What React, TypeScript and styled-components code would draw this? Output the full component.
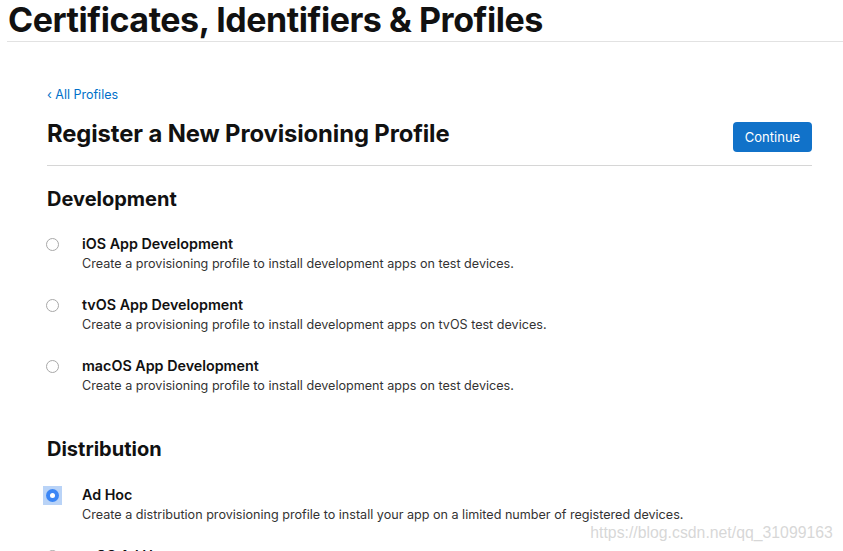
import React from "react";
import styled, { createGlobalStyle } from "styled-components";

const Global = createGlobalStyle`
  html, body { margin: 0; padding: 0; background: #fff; }
  body { font-family: Inter, "Noto Sans", "Liberation Sans", sans-serif; color: #1d1d1f; overflow: hidden; }
`;

const Page = styled.div`
  position: relative;
  width: 843px;
  height: 551px;
  overflow: hidden;
`;

const TopBar = styled.header`
  margin-left: 7px;
  border-bottom: 1px solid #e2e2e2;
  height: 41px;
  display: flex;
  align-items: flex-start;
`;

const PageTitle = styled.h1`
  margin: 0;
  padding-left: 1px;
  font-size: 34px;
  line-height: 42px;
  margin-top: -1px;
  font-weight: 700;
  letter-spacing: -0.45px;
  color: #111;
`;

const Content = styled.main`
  padding: 41px 31px 0 47px;
`;

const BackLink = styled.a`
  display: inline-flex;
  align-items: center;
  gap: 4px;
  font-size: 12.5px;
  line-height: 18px;
  color: #0070c9;
  text-decoration: none;
`;

const Header = styled.div`
  display: flex;
  align-items: flex-end;
  justify-content: space-between;
  padding: 16px 0 13px;
  border-bottom: 1px solid #d6d6d6;
`;

const Heading = styled.h2`
  margin: 0 0 4px;
  font-size: 23.8px;
  line-height: 28px;
  font-weight: 700;
  color: #111;
  letter-spacing: -0.1px;
`;

const Button = styled.button`
  font-family: inherit;
  background: #1172c9;
  color: #fff;
  border: 0;
  border-radius: 4px;
  width: 79px;
  height: 30px;
  font-size: 13px;
  cursor: pointer;
`;

const Section = styled.section<{ $top: number }>`
  margin-top: ${(p) => p.$top}px;
`;

const SectionTitle = styled.h3`
  margin: 0;
  font-size: 20px;
  line-height: 24px;
  font-weight: 700;
  color: #111;
`;

const List = styled.div<{ $top: number }>`
  margin-top: ${(p) => p.$top}px;
  display: flex;
  flex-direction: column;
  gap: 21px;
`;

const Row = styled.label`
  display: grid;
  grid-template-columns: 35px 1fr;
  align-items: start;
`;

const RadioWrap = styled.span<{ $focus: boolean }>`
  width: 19px;
  height: 19px;
  margin-left: -4px;
  margin-top: 1px;
  display: flex;
  align-items: center;
  justify-content: center;
  background: ${(p) => (p.$focus ? "#b9d3f7" : "transparent")};
`;

const Radio = styled.span<{ $checked: boolean }>`
  box-sizing: border-box;
  width: 13px;
  height: 13px;
  border-radius: 50%;
  border: ${(p) => (p.$checked ? "none" : "1px solid #a8a8a8")};
  background: ${(p) => (p.$checked ? "#3b86f5" : "#fff")};
  display: flex;
  align-items: center;
  justify-content: center;
  &::after {
    content: "";
    display: ${(p) => (p.$checked ? "block" : "none")};
    width: 5px;
    height: 5px;
    border-radius: 50%;
    background: #fff;
  }
`;

const Texts = styled.span`
  display: flex;
  flex-direction: column;
`;

const OptTitle = styled.span`
  font-size: 14.3px;
  line-height: 20px;
  font-weight: 600;
  color: #111;
`;

const OptDesc = styled.span`
  font-size: 12.6px;
  line-height: 20px;
  color: #333;
`;

const Watermark = styled.div`
  position: absolute;
  right: 10px;
  top: 522px;
  font-family: "Liberation Sans", sans-serif;
  font-size: 17px;
  line-height: 22px;
  color: rgba(205, 205, 205, 0.8);
  transform: scaleX(0.93);
  transform-origin: right center;
`;

type Opt = { title: string; desc: string; checked?: boolean };

const dev: Opt[] = [
  { title: "iOS App Development", desc: "Create a provisioning profile to install development apps on test devices." },
  { title: "tvOS App Development", desc: "Create a provisioning profile to install development apps on tvOS test devices." },
  { title: "macOS App Development", desc: "Create a provisioning profile to install development apps on test devices." },
];

const dist: Opt[] = [
  { title: "Ad Hoc", desc: "Create a distribution provisioning profile to install your app on a limited number of registered devices.", checked: true },
  { title: "tvOS Ad Hoc", desc: "Create a distribution provisioning profile to install your app on a limited number of registered tvOS devices." },
];

function Options({ items, top }: { items: Opt[]; top: number }) {
  return (
    <List $top={top}>
      {items.map((o) => (
        <Row key={o.title}>
          <RadioWrap $focus={!!o.checked}>
            <Radio $checked={!!o.checked} />
          </RadioWrap>
          <Texts>
            <OptTitle>{o.title}</OptTitle>
            <OptDesc>{o.desc}</OptDesc>
          </Texts>
        </Row>
      ))}
    </List>
  );
}

export default function App() {
  return (
    <Page>
      <Global />
      <TopBar>
        <PageTitle>Certificates, Identifiers &amp; Profiles</PageTitle>
      </TopBar>
      <Content>
        <BackLink href="#">‹ All Profiles</BackLink>
        <Header>
          <Heading>Register a New Provisioning Profile</Heading>
          <Button>Continue</Button>
        </Header>
        <Section $top={21}>
          <SectionTitle>Development</SectionTitle>
          <Options items={dev} top={23} />
        </Section>
        <Section $top={41}>
          <SectionTitle>Distribution</SectionTitle>
          <Options items={dist} top={24} />
        </Section>
      </Content>
      <Watermark>https://blog.csdn.net/qq_31099163</Watermark>
    </Page>
  );
}
